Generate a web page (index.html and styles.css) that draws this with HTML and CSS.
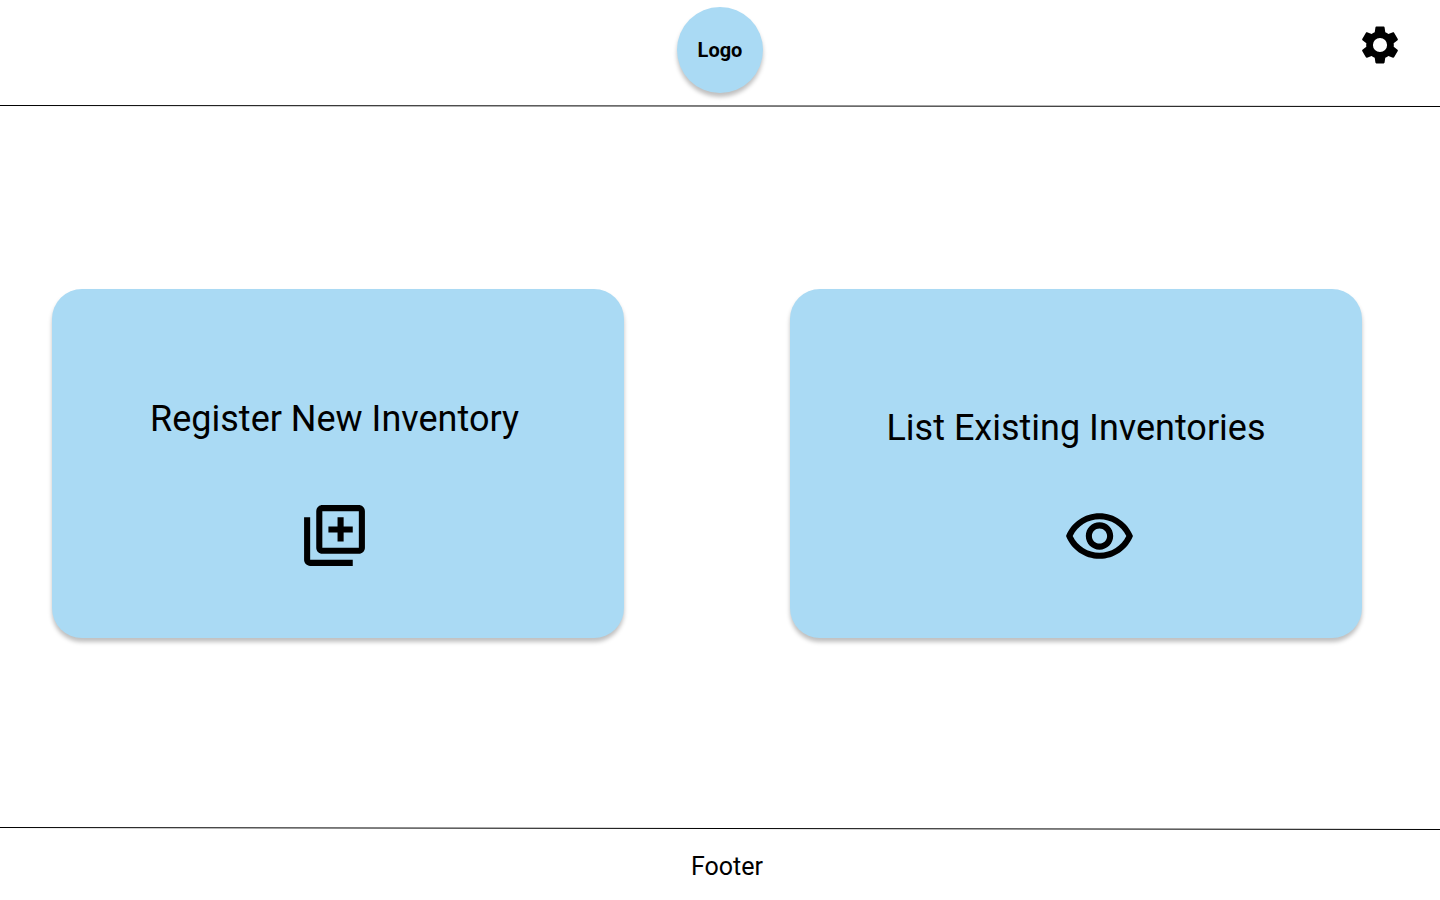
FILE: index.html
```html
<!DOCTYPE html>
<html lang="en">
<head>
  <meta charset="utf-8">
  <meta name="viewport" content="width=device-width, initial-scale=1">
  <title>Inventory</title>
  <link rel="stylesheet" href="styles.css">
</head>
<body>
  <header class="header">
    <a class="logo" href="#">Logo</a>
    <button class="settings" type="button" aria-label="Settings">
      <svg class="settings-icon" viewBox="0 0 24 24" aria-hidden="true"><path d="M19.14 12.94c.04-.3.06-.61.06-.94 0-.32-.02-.64-.07-.94l2.03-1.58c.18-.14.23-.41.12-.61l-1.92-3.32c-.12-.22-.37-.29-.59-.22l-2.39.96c-.5-.38-1.03-.7-1.62-.94l-.36-2.54c-.04-.24-.24-.41-.48-.41h-3.84c-.24 0-.43.17-.47.41l-.36 2.54c-.59.24-1.13.57-1.62.94l-2.39-.96c-.22-.08-.47 0-.59.22L2.74 8.870c-.12.21-.08.47.12.61l2.03 1.58c-.05.3-.09.63-.09.94s.02.64.07.94l-2.03 1.58c-.18.14-.23.41-.12.61l1.92 3.32c.12.22.37.29.59.22l2.39-.96c.5.38 1.03.7 1.62.94l.36 2.54c.05.24.24.41.48.41h3.84c.24 0 .44-.17.47-.41l.36-2.54c.59-.24 1.13-.56 1.62-.94l2.39.96c.22.08.47 0 .59-.22l1.92-3.32c.12-.22.07-.47-.12-.61l-2.01-1.58zM12 15.7a3.700 3.700 0 1 1 0-7.400 3.700 3.700 0 0 1 0 7.400z"/></svg>
    </button>
  </header>
  <svg class="rule" viewBox="0 0 1440 3" preserveAspectRatio="none" aria-hidden="true"><line x1="0" y1="0.5" x2="1440" y2="1.5"/></svg>

  <main class="main">
    <button class="card card-register" type="button">
      <span class="card-title">Register New Inventory</span>
      <svg class="card-icon" viewBox="0 0 24 24" aria-hidden="true"><path d="M4 6H2v14c0 1.100.9 2 2 2h14v-2H4V6zm16-4H8c-1.100 0-2 .9-2 2v12c0 1.100.9 2 2 2h12c1.100 0 2-.9 2-2V4c0-1.100-.9-2-2-2zm0 14H8V4h12v12zm-7-2h2v-3h3V9h-3V6h-2v3h-3v2h3v3z"/></svg>
    </button>
    <button class="card card-list" type="button">
      <span class="card-title">List Existing Inventories</span>
      <svg class="card-icon" viewBox="0 0 24 24" aria-hidden="true"><path d="M12 6c3.790 0 7.170 2.130 8.820 5.500C19.170 14.870 15.790 17 12 17s-7.170-2.130-8.820-5.500C4.830 8.130 8.210 6 12 6m0-2C7 4 2.730 7.110 1 11.500 2.730 15.890 7 19 12 19s9.270-3.110 11-7.500C21.270 7.110 17 4 12 4zm0 5c1.380 0 2.500 1.120 2.500 2.500S13.380 14 12 14s-2.500-1.120-2.500-2.500S10.620 9 12 9m0-2c-2.480 0-4.500 2.020-4.500 4.500S9.520 16 12 16s4.500-2.020 4.500-4.500S14.480 7 12 7z"/></svg>
    </button>
  </main>

  <svg class="rule" viewBox="0 0 1440 3" preserveAspectRatio="none" aria-hidden="true"><line x1="0" y1="0.5" x2="1440" y2="2.5"/></svg>
  <footer class="footer">Footer</footer>
</body>
</html>
```

FILE: styles.css
```css
* {
  box-sizing: border-box;
}

body {
  display: flex;
  flex-direction: column;
  min-height: 100vh;
  margin: 0;
  background: #fff;
  color: #000;
  font-family: Roboto, "Liberation Sans", sans-serif;
}

button {
  border: 0;
  color: inherit;
  font: inherit;
  cursor: pointer;
}

.header {
  display: grid;
  grid-template-columns: 1fr auto 1fr;
  align-items: start;
  padding: 7px 37px 12px;
}

.logo {
  display: flex;
  grid-column: 2;
  align-items: center;
  justify-content: center;
  width: 86px;
  height: 86px;
  border-radius: 50%;
  background: #aadaf4;
  box-shadow: 0 4px 4px rgba(0, 0, 0, 0.25);
  color: inherit;
  font-size: 20px;
  font-weight: 700;
  text-decoration: none;
}

.settings {
  justify-self: end;
  margin-top: 15px;
  padding: 0;
  background: none;
}

.settings-icon {
  display: block;
  width: 46px;
  height: 46px;
}

.rule {
  display: block;
  flex: none;
  width: 100%;
  height: 3px;
  stroke: #000;
  stroke-width: 1;
}

.main {
  display: grid;
  flex: 1;
  grid-template-columns: 1fr 1fr;
  gap: 166px;
  align-items: start;
  padding: 181px 78px 60px 52px;
}

.card {
  display: flex;
  flex-direction: column;
  align-items: center;
  min-height: 349px;
  border-radius: 30px;
  background: #aadaf4;
  box-shadow: 0 4px 4px rgba(0, 0, 0, 0.25);
}

.card-register {
  gap: 59px;
  padding: 109px 7px 66px 0;
}

.card-list {
  gap: 52px;
  padding: 118px 0 64px;
}

.card-title {
  font-size: 36px;
  line-height: 42px;
}

.card-icon {
  width: 73px;
  height: 73px;
}

.card-list .card-icon {
  margin-left: 47px;
}

.footer {
  padding: 22px 0 18px 14px;
  font-size: 25px;
  line-height: 30px;
  text-align: center;
}
```
